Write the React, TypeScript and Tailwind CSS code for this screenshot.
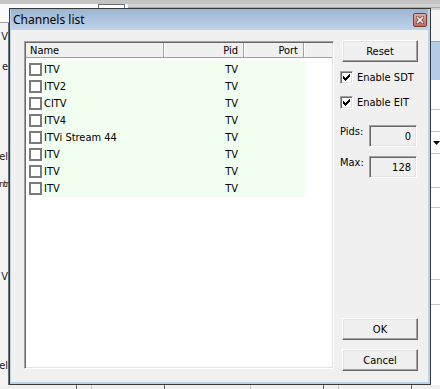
import React from "react";

const rows = ["ITV", "ITV2", "CITV", "ITV4", "ITVi Stream 44", "ITV", "ITV", "ITV"];

function Btn({ label }: { label: string }) {
  return (
    <div className="ml-[2px] flex h-[22px] w-[76px] items-center justify-center border border-t-white border-l-white border-b-[#696969] border-r-[#696969] bg-[#f0f0f0] text-[11px] text-black shadow-[inset_-1px_-1px_#a0a0a0,inset_1px_1px_#e3e3e3]">
      {label}
    </div>
  );
}

function Check({ label }: { label: string }) {
  return (
    <div className="flex h-[13px] items-center">
      <div className="flex h-[13px] w-[13px] items-center justify-center border border-t-[#a0a0a0] border-l-[#a0a0a0] border-b-white border-r-white bg-white shadow-[inset_1px_1px_#696969,inset_-1px_-1px_#e3e3e3]">
        <svg width="9" height="9" viewBox="0 0 9 9" shapeRendering="crispEdges">
          <path d="M1 3h1v1h1v1h1V4h1V3h1V2h1V1h1v3H7v1H6v1H5v1H4v1H3V7H2V6H1z" fill="#000" />
        </svg>
      </div>
      <span className="ml-[4px] text-[11px] text-black">{label}</span>
    </div>
  );
}

function Field({ label, value }: { label: string; value: string }) {
  return (
    <div className="flex items-start justify-between">
      <span className="pt-[1px] text-[11px] text-black">{label}</span>
      <div className="flex h-[22px] w-[48px] items-center justify-end border border-t-[#a0a0a0] border-l-[#a0a0a0] border-b-white border-r-white bg-[#f0f0f0] pr-[5px] text-[11px] text-black shadow-[inset_1px_1px_#696969,inset_-1px_-1px_#e3e3e3]">
        {value}
      </div>
    </div>
  );
}

export default function App() {
  return (
    <div className="flex h-[389px] w-[440px] flex-col overflow-hidden bg-[#f0f0f0] font-['Tahoma','DejaVu_Sans_Condensed','DejaVu_Sans',sans-serif] leading-none">
      {/* top strip of underlying window */}
      <div className="h-[4px] w-full bg-[#c4c4c4]" />
      <div className="flex h-[4px] w-full">
        <div className="flex w-[128px] bg-[#fafafa]">
          <div className="ml-[98px] h-[4px] w-[27px] border-l border-t border-[#6d6d6d] border-r-[#3c8ad0] border-r bg-white" />
        </div>
        <div className="flex-1 border-b border-[#a8a8a8] bg-[#d2d2d2]" />
      </div>

      <div className="flex h-[377px] w-full">
        {/* left strip */}
        <div className="flex w-[9px] flex-col">
          <div className="h-[15px] border-b border-[#a0a0a0] bg-[#fafafa]" />
          <div className="flex flex-1 flex-col border-r border-[#6d6d6d] bg-[#f3f3f3] text-[11px] text-[#1a1a1a]">
            <div className="mt-[7px] flex h-[13px] items-center justify-end whitespace-nowrap">V</div>
            <div className="mt-[17px] flex h-[13px] items-center justify-end whitespace-nowrap">e</div>
            <div className="mt-[77px] flex h-[13px] items-center justify-end whitespace-nowrap">el</div>
            <div className="mt-[15px] flex h-[13px] items-center justify-end whitespace-nowrap text-[9px] tracking-[-1px]">ntr</div>
            <div className="mt-[79px] flex h-[13px] items-center justify-end whitespace-nowrap">V</div>
            <div className="mt-[76px] flex h-[13px] items-center justify-end whitespace-nowrap">el</div>
          </div>
        </div>

        {/* dialog */}
        <div className="flex h-[377px] w-[422px] flex-col border border-[#3a3a3a] bg-[#b9d3ec] pb-[2px] pl-[1px] pr-[2px]">
          <div className="flex h-[21px] items-center justify-between bg-gradient-to-b from-[#9cb5d2] to-[#bfd3ea] pl-[2px] pr-[1px]">
            <span className="font-['Noto_Sans','Open_Sans',sans-serif] text-[12px] text-black">Channels list</span>
            <div className="flex h-[14px] w-[14px] items-center justify-center rounded-[2px] border border-[#7d3b34] bg-gradient-to-b from-[#e0aaa2] to-[#c26a5f]">
              <svg width="8" height="8" viewBox="0 0 8 8">
                <path d="M1.5 1.5l5 5M6.5 1.5l-5 5" stroke="#5a2a26" strokeWidth="3" strokeLinecap="square" />
                <path d="M1.5 1.5l5 5M6.5 1.5l-5 5" stroke="#fff" strokeWidth="1.6" strokeLinecap="square" />
              </svg>
            </div>
          </div>

          <div className="flex flex-1 bg-[#f0f0f0] pl-[13px]">
            {/* list */}
            <div className="mt-[11px] flex h-[328px] w-[310px] flex-col border border-t-[#a0a0a0] border-l-[#a0a0a0] border-b-white border-r-white bg-white shadow-[inset_1px_1px_#696969,inset_-1px_-1px_#e3e3e3] p-[1px]">
              <div className="flex h-[15px] border-b border-[#a0a0a0] bg-[#f0f0f0] text-[11px] text-black">
                <div className="flex w-[138px] items-center border-r border-[#a0a0a0] pl-[4px]">Name</div>
                <div className="flex w-[80px] items-center justify-end border-r border-[#a0a0a0] pr-[5px] shadow-[inset_1px_0_#fff]">Pid</div>
                <div className="flex w-[60px] items-center justify-end border-r border-[#a0a0a0] pr-[5px] shadow-[inset_1px_0_#fff]">Port</div>
                <div className="flex-1 shadow-[inset_1px_0_#fff]" />
              </div>
              <div className="flex flex-col pt-[3px] text-[11px] text-black">
                {rows.map((r, i) => (
                  <div key={i} className="flex h-[17px] items-center pl-[3px]">
                    <div className="h-[13px] w-[13px] border-2 border-[#7b7b7b] bg-white" />
                    <div className="ml-[1px] flex h-[17px] w-[262px] items-center bg-[#f0fff0]">
                      <div className="w-[121px] pl-[1px] whitespace-nowrap">{r}</div>
                      <div className="w-[80px] pr-[6px] text-right">TV</div>
                      <div className="flex-1" />
                    </div>
                  </div>
                ))}
              </div>
            </div>

            {/* right column */}
            <div className="ml-[6px] flex w-[77px] flex-col pb-[11px] pt-[10px]">
              <Btn label="Reset" />
              <div className="mt-[9px]">
                <Check label="Enable SDT" />
              </div>
              <div className="mt-[12px]">
                <Check label="Enable EIT" />
              </div>
              <div className="mt-[16px]">
                <Field label="Pids:" value="0" />
              </div>
              <div className="mt-[9px]">
                <Field label="Max:" value="128" />
              </div>
              <div className="mt-auto">
                <Btn label="OK" />
              </div>
              <div className="mt-[9px]">
                <Btn label="Cancel" />
              </div>
            </div>
          </div>
        </div>

        {/* right strip */}
        <div className="flex w-[9px] flex-col bg-[#f0f0f0]">
          <div className="h-[2px] bg-[#d2d2d2]" />
          <div className="h-[32px] border-b border-[#a0a0a0] bg-[#f5f5f5]" />
          <div className="h-[38px] bg-[#b4cce6]" />
          <div className="h-[30px] border-b border-[#c8c8c8] bg-white" />
          <div className="h-[22px] border-b border-[#c8c8c8] bg-white" />
          <div className="flex h-[22px] items-center border-b border-[#c8c8c8] bg-white pl-[2px]">
            <svg width="7" height="4" viewBox="0 0 7 4">
              <path d="M0 0h7L3.5 4z" fill="#000" />
            </svg>
          </div>
          <div className="h-[34px] border-b border-[#c8c8c8] bg-white" />
          <div className="h-[20px] border-b border-[#c8c8c8] bg-white" />
          <div className="h-[72px] border-b border-[#c8c8c8] bg-white" />
          <div className="h-[25px] border-b border-[#c8c8c8] bg-white" />
          <div className="flex-1 bg-white" />
        </div>
      </div>

      {/* bottom strip */}
      <div className="flex h-[4px] w-full bg-[#f0f0f0]">
        <div className="w-[77px] border-r border-[#6a6a6a]" />
        <div className="w-[15px] border-r border-[#c4c4c4]" />
        <div className="w-[73px] border-r border-[#6a6a6a]" />
        <div className="w-[86px] border-r border-[#c4c4c4]" />
        <div className="w-[73px] border-r border-[#6a6a6a]" />
        <div className="w-[15px] border-r border-[#c4c4c4]" />
        <div className="w-[73px] border-r border-[#6a6a6a]" />
        <div className="flex-1" />
      </div>
    </div>
  );
}
